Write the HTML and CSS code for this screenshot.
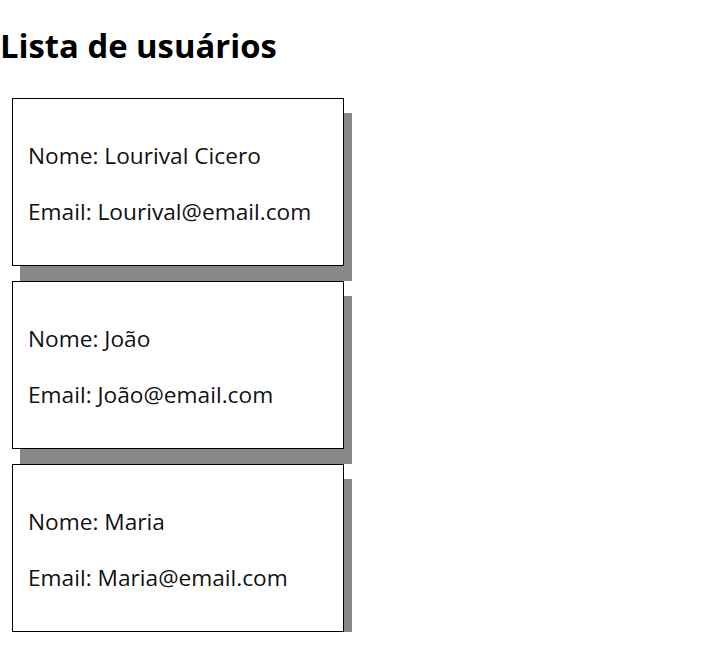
FILE: index.html
```
<!DOCTYPE html>
<html lang="pt-BR">
<head>
<meta charset="utf-8">
<title>Lista de usuários</title>
<link rel="stylesheet" href="styles.css">
</head>
<body>
<h1 class="title">Lista de usuários</h1>
<div class="list">
  <div class="card">
    <p class="line">Nome: Lourival Cicero</p>
    <p class="line">Email: Lourival@email.com</p>
  </div>
  <div class="card">
    <p class="line">Nome: João</p>
    <p class="line">Email: João@email.com</p>
  </div>
  <div class="card">
    <p class="line">Nome: Maria</p>
    <p class="line">Email: Maria@email.com</p>
  </div>
</div>
</body>
</html>
```

FILE: styles.css
```
html, body {
  margin: 0;
  padding: 0;
  background: #fff;
}
body {
  font-family: "Open Sans", "Noto Sans", sans-serif;
  color: #000;
}
.title {
  margin: 25px 0 31px 0;
  font-size: 32.8px;
  line-height: 42px;
  font-weight: 700;
}
.list {
  display: flex;
  flex-direction: column;
  gap: 15px;
  padding-left: 12px;
}
.card {
  width: 300px;
  padding: 17px 15px 13px 15px;
  border: 1px solid #000;
  box-shadow: 8px 15px 0 #888888;
  background: #fff;
}
.line {
  margin: 24px 0;
  font-size: 22.7px;
  line-height: 32px;
  color: #111;
}
```
